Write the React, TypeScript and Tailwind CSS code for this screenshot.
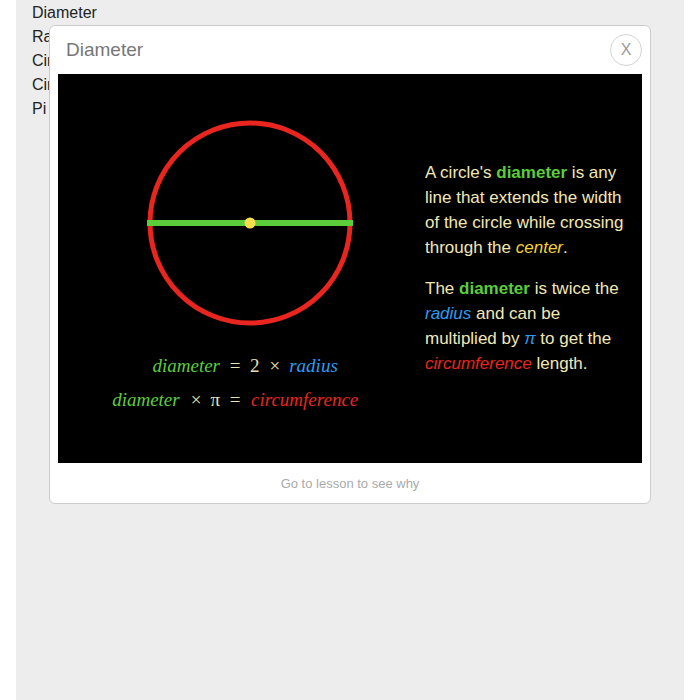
import React from 'react';

const terms = ['Diameter', 'Radius', 'Circumference', 'Circle Area', 'Pi'];

const DiameterFigure: React.FC = () => (
    <svg width="212" height="212" viewBox="0 0 212 212" className="block">
        <circle cx="106" cy="106" r="100" fill="none" stroke="#e8251f" strokeWidth="5" />
        <line x1="3" y1="106" x2="209" y2="106" stroke="#5ccd3a" strokeWidth="6" />
        <circle cx="106" cy="106" r="5.5" fill="#f7df4e" />
    </svg>
);

const App: React.FC = () => {
    return (
        <div className="relative h-[700px] bg-white font-['Liberation_Sans',Arial,sans-serif]">
            <div className="mx-4 h-full bg-[#ededed] px-4 pt-px text-[16px] leading-6 text-[#222]">
                {terms.map(t => (
                    <div key={t}>{t}</div>
                ))}
            </div>

            <div className="absolute left-[49px] top-[25px] flex w-[602px] flex-col rounded-md border border-[#cccccc] bg-white px-2 pt-2">
                <header className="mb-[8px] flex h-8 items-center justify-between">
                    <h2 className="pl-2 text-[19px] text-[#777777]">Diameter</h2>
                    <button className="flex h-8 w-8 items-center justify-center rounded-full border border-[#d4d4d4] text-[16px] text-[#9a9a9a]">
                        X
                    </button>
                </header>

                <div className="flex h-[389px] bg-black">
                    <div className="flex w-[367px] flex-col pt-[43px]">
                        <div className="ml-[86px]">
                            <DiameterFigure />
                        </div>
                        <div className="mt-[25px] grid grid-cols-[162px_30px_auto] gap-y-[10px] font-['Liberation_Serif',serif] text-[19px] leading-6 text-[#e9e0b3]">
                            <span className="text-right italic text-[#5ccd3a]">diameter</span>
                            <span className="text-center">=</span>
                            <span className="flex">
                                <span>2</span>
                                <span className="ml-[10px]">×</span>
                                <span className="ml-[9px] italic text-[#2a9df0]">radius</span>
                            </span>
                            <span className="flex justify-end">
                                <span className="italic text-[#5ccd3a]">diameter</span>
                                <span className="ml-[11px]">×</span>
                                <span className="ml-[9px]">π</span>
                            </span>
                            <span className="text-center">=</span>
                            <span className="pl-[1px] italic text-[#e8251f]">circumference</span>
                        </div>
                    </div>

                    <div className="mb-[2px] w-[203px] self-center text-[17px] leading-[25px] text-[#f2e8b6]">
                        <p className="mb-4">
                            A circle's <b className="text-[#5ccd3a]">diameter</b> is any line that extends the width of the circle while crossing through the{' '}
                            <i className="text-[#f5d431]">center</i>.
                        </p>
                        <p>
                            The <b className="text-[#5ccd3a]">diameter</b> is twice the <i className="text-[#2a9df0]">radius</i> and can be multiplied by{' '}
                            <i className="text-[#2a9df0]">π</i> to get the <i className="text-[#e8251f]">circumference</i> length.
                        </p>
                    </div>
                </div>

                <footer className="flex h-10 items-center justify-center pt-[2px] text-[13px] text-[#aaaaaa]">
                    Go to lesson to see why
                </footer>
            </div>
        </div>
    );
};

export default App;
